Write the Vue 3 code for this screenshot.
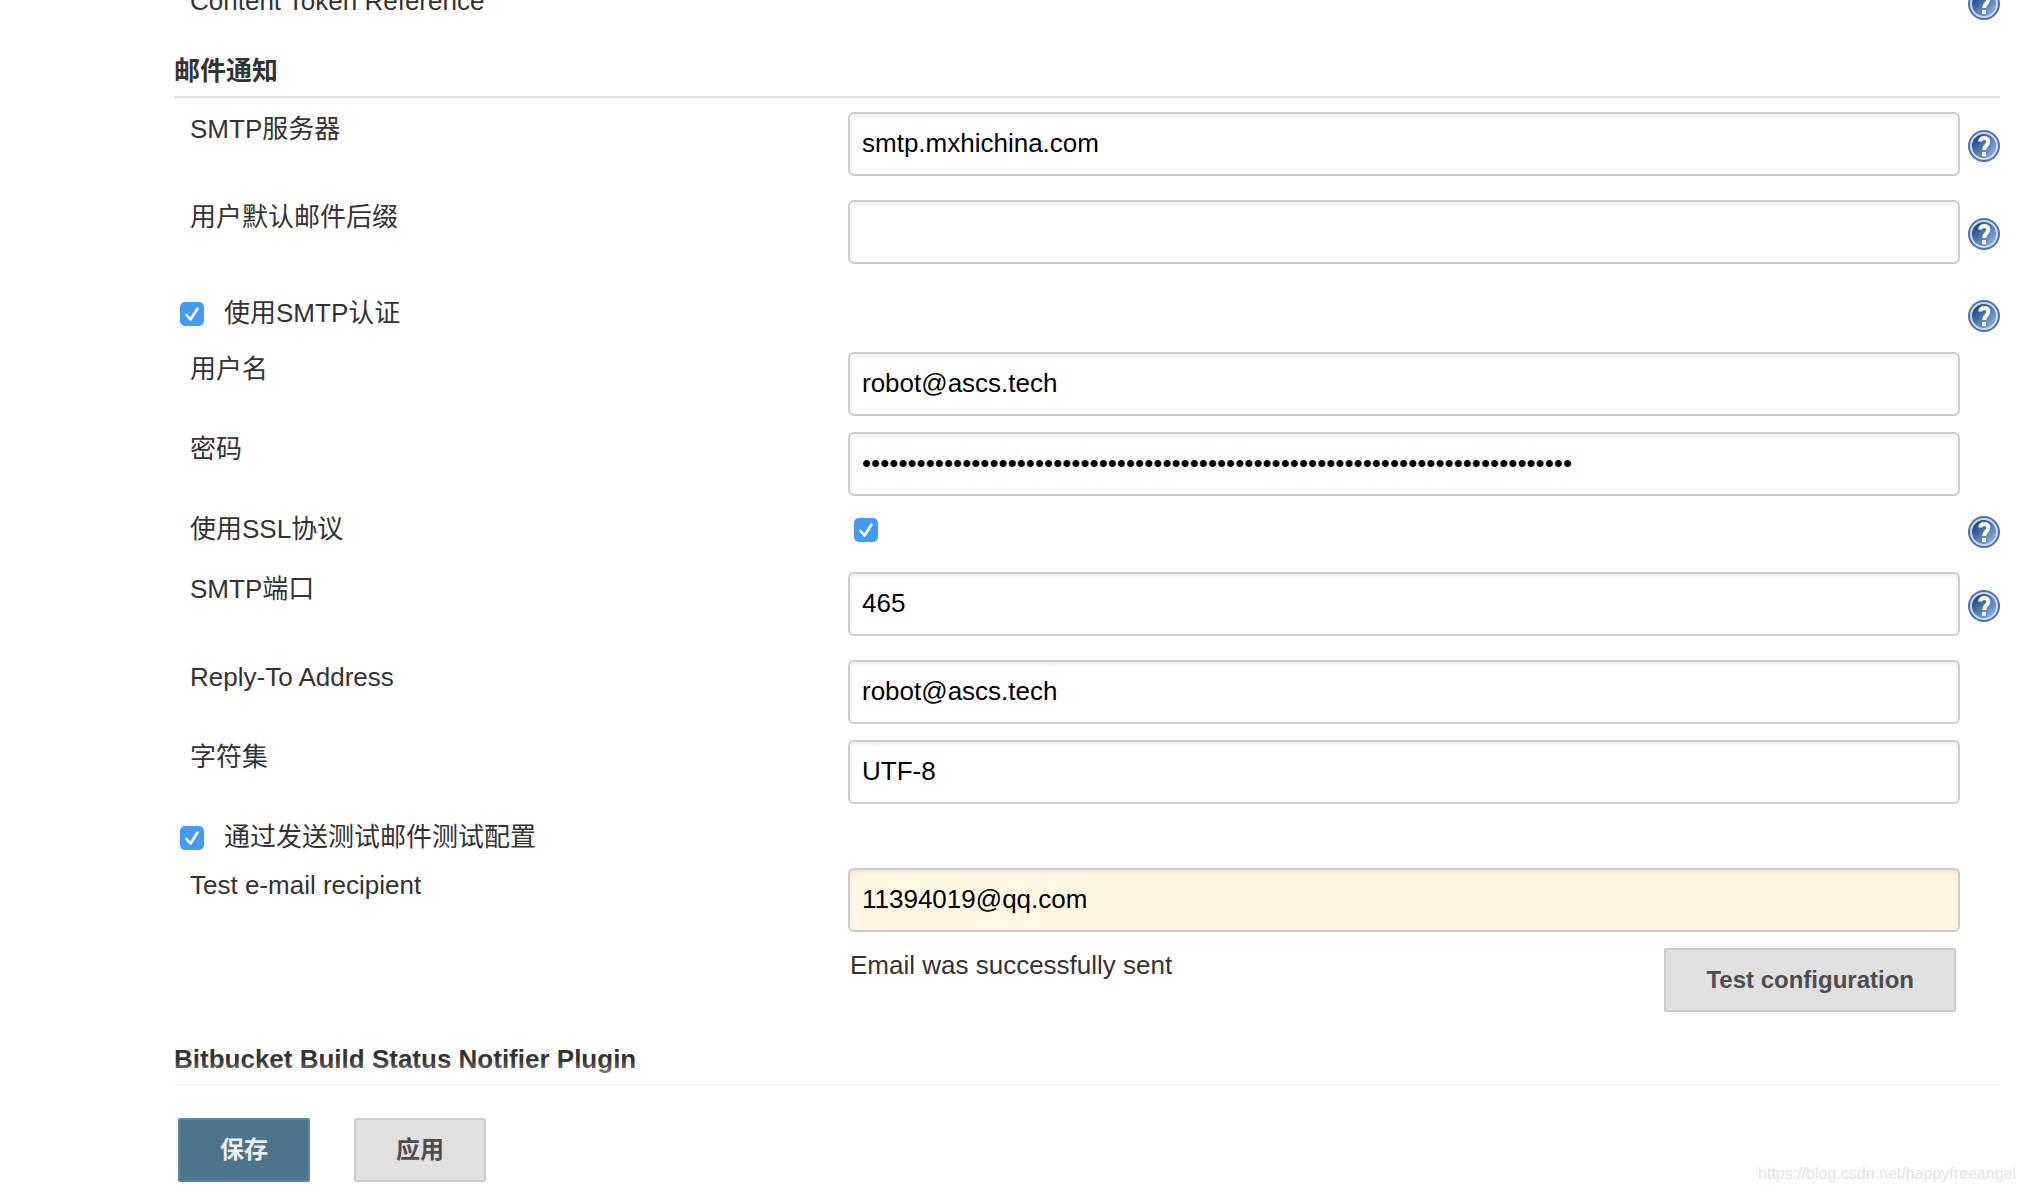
<script setup>
import { reactive } from 'vue'

const form = reactive({
  smtpServer: 'smtp.mxhichina.com',
  suffix: '',
  useAuth: true,
  username: 'robot@ascs.tech',
  password: 'x'.repeat(78),
  useSsl: true,
  port: '465',
  replyTo: 'robot@ascs.tech',
  charset: 'UTF-8',
  testConfig: true,
  recipient: '11394019@qq.com'
})

const rows = [
  { kind: 'text', key: 'smtpServer', label: 'SMTP服务器', help: true },
  { kind: 'text', key: 'suffix', label: '用户默认邮件后缀', help: true },
  { kind: 'option', key: 'useAuth', label: '使用SMTP认证', help: true },
  { kind: 'text', key: 'username', label: '用户名' },
  { kind: 'password', key: 'password', label: '密码' },
  { kind: 'check', key: 'useSsl', label: '使用SSL协议', help: true },
  { kind: 'text', key: 'port', label: 'SMTP端口', help: true },
  { kind: 'text', key: 'replyTo', label: 'Reply-To Address' },
  { kind: 'text', key: 'charset', label: '字符集' },
  { kind: 'option', key: 'testConfig', label: '通过发送测试邮件测试配置' },
  { kind: 'text', key: 'recipient', label: 'Test e-mail recipient', filled: true }
]
</script>

<template>
  <div class="page">
    <svg class="defs" width="0" height="0" aria-hidden="true">
      <defs>
        <linearGradient id="helpFill" x1="0" y1="0" x2="1" y2="1">
          <stop offset="0.2" stop-color="#264d8a" />
          <stop offset="0.9" stop-color="#8fb4dc" />
        </linearGradient>
        <symbol id="helpIcon" viewBox="0 0 32 32">
          <circle cx="16" cy="16" r="16" fill="#4a73aa" />
          <circle cx="16" cy="16" r="13" fill="url(#helpFill)" stroke="#ccd8e8" stroke-width="2" />
          <path d="M12.2 11.5C12.2 6.8 20.4 6.8 20.4 11.6C20.4 15 16.2 15.4 16.2 20" fill="none" stroke="#fff" stroke-width="4" />
          <rect x="14" y="22" width="4" height="4" rx="1" fill="#fff" />
        </symbol>
      </defs>
    </svg>

    <form class="config" @submit.prevent>
      <div class="row plain">
        <span class="label">Content Token Reference</span>
        <a class="help" href="#help" aria-label="Help"><svg><use href="#helpIcon" /></svg></a>
      </div>

      <h2 class="section">邮件通知</h2>

      <div
        v-for="row in rows"
        :key="row.key"
        class="row"
        :class="[row.kind, { helped: row.help }]"
      >
        <template v-if="row.kind === 'option'">
          <label class="option-label">
            <input v-model="form[row.key]" class="tick" type="checkbox" />
            <span>{{ row.label }}</span>
          </label>
        </template>
        <template v-else>
          <label class="label" :for="row.key">{{ row.label }}</label>
          <input v-if="row.kind === 'check'" :id="row.key" v-model="form[row.key]" class="tick" type="checkbox" />
          <input
            v-else
            :id="row.key"
            v-model="form[row.key]"
            class="field"
            :class="{ filled: row.filled }"
            :type="row.kind"
            autocomplete="off"
          />
        </template>
        <a v-if="row.help" class="help" href="#help" aria-label="Help"><svg><use href="#helpIcon" /></svg></a>
      </div>

      <div class="result">
        <span>Email was successfully sent</span>
        <button type="button" class="btn">Test configuration</button>
      </div>

      <h2 class="section">Bitbucket Build Status Notifier Plugin</h2>
    </form>

    <footer class="actions">
      <button type="submit" class="btn primary">保存</button>
      <button type="button" class="btn">应用</button>
    </footer>
    <span class="watermark">https://blog.csdn.net/happyfreeangel</span>
  </div>
</template>

<style>
body {
  margin: 0;
  background: #fff;
}
</style>

<style scoped>
.page {
  position: relative;
  overflow: hidden;
  color: #333;
  font-family: "Liberation Sans", "Noto Sans CJK SC", sans-serif;
  font-size: 26px;
  line-height: 34px;
}
.defs {
  position: absolute;
}
/* The form is scrolled: its first row is cut by the top edge. */
.config {
  margin-top: -16px;
  padding: 0 24px 0 174px;
}
.row {
  display: grid;
  grid-template-columns: minmax(0, 674px) minmax(0, 1fr) 40px;
  align-items: start;
  min-height: 80px;
}
.row.helped {
  min-height: 88px;
}
.row.plain {
  min-height: 56px;
}
.row.check {
  min-height: 60px;
}
.row.option {
  min-height: 48px;
}
.row.option.helped {
  min-height: 56px;
  padding-top: 8px;
}
.label {
  padding-left: 16px;
}
.option-label {
  grid-column: 1 / 3;
  display: flex;
  gap: 14px;
}
.help {
  grid-column: 3;
  justify-self: end;
  width: 32px;
  height: 32px;
  margin-top: 4px;
}
.row.text .help {
  margin-top: 18px;
}
.help svg {
  display: block;
  width: 32px;
  height: 32px;
}
.field {
  box-sizing: border-box;
  width: 100%;
  height: 64px;
  padding: 0 12px 2px;
  border: 2px solid #ccc;
  border-radius: 6px;
  background: #fff;
  box-shadow: inset 0 2px 4px rgba(0, 0, 0, 0.08);
  color: #000;
  font: inherit;
  outline: none;
}
.field.filled {
  background: #fff7e1;
}
.tick {
  appearance: none;
  flex: none;
  width: 24px;
  height: 24px;
  margin: 6px;
  border-radius: 5px;
  background: #419bf9 url("data:image/svg+xml,%3Csvg xmlns='http://www.w3.org/2000/svg' viewBox='0 0 24 24'%3E%3Cpath d='M6.5 13l4 4.5L17.5 6.5' fill='none' stroke='%23fff' stroke-width='2.6' stroke-linecap='round' stroke-linejoin='round'/%3E%3C/svg%3E");
}
.section {
  margin: 0 0 14px;
  padding: 14px 0 8px;
  border-bottom: 2px solid #e0e0e0;
  font-size: 26px;
  line-height: 34px;
}
.result {
  display: flex;
  justify-content: space-between;
  align-items: flex-start;
  margin-bottom: 16px;
  padding: 0 44px 0 676px;
}
.btn {
  box-sizing: border-box;
  height: 64px;
  padding: 0 40px;
  border: 2px solid #ccc;
  border-radius: 2px;
  background: #e0e0e0;
  color: #4d4d4d;
  font: bold 24px/34px "Liberation Sans", "Noto Sans CJK SC", sans-serif;
}
.btn.primary {
  border-color: #5788a1;
  background: #4b758b;
  color: #eee;
}
.actions {
  position: relative;
  display: flex;
  gap: 44px;
  padding: 18px 24px 10px 178px;
  background: #fff;
}
.actions::before {
  content: "";
  position: absolute;
  right: 0;
  bottom: 100%;
  left: 0;
  height: 40px;
  background: linear-gradient(rgba(255, 255, 255, 0), #fff 90%);
  pointer-events: none;
}
.watermark {
  position: absolute;
  right: 8px;
  bottom: 8px;
  color: #e4e4e4;
  font-size: 16px;
  line-height: 20px;
}
</style>
